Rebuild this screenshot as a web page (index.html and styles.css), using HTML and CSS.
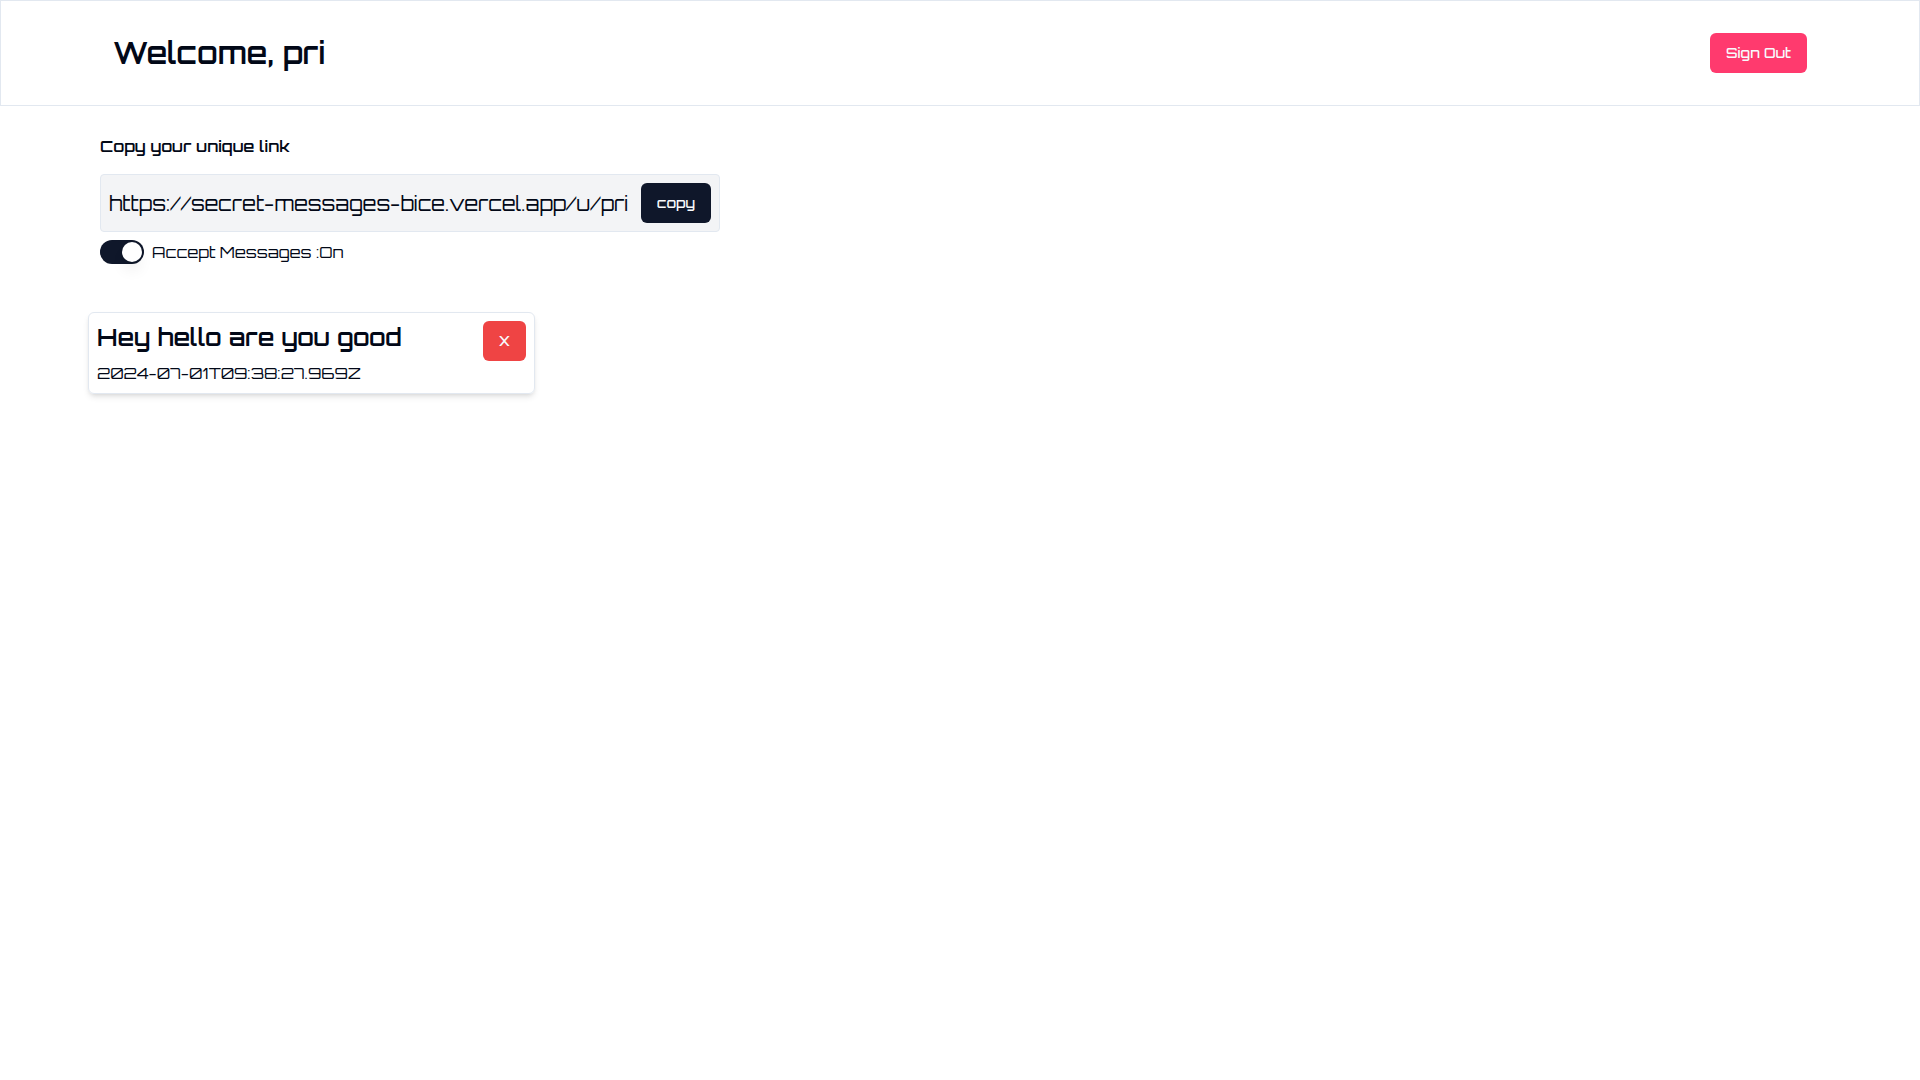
FILE: index.html
```
<!DOCTYPE html>
<html lang="en">
<head>
    <meta charset="UTF-8">
    <meta name="viewport" content="width=device-width, initial-scale=1.0">
    <link rel="stylesheet" href="styles.css">
    <title>Secret Messages</title>
</head>
<body>

    <header class="navbar">
        <h1 class="welcome">Welcome, pri</h1>
        <button type="button" class="btn btn-signout">Sign Out</button>
    </header>

    <main>
        <section class="settings">
            <label class="link-label" for="unique-link">Copy your unique link</label>
            <div class="link-box">
                <input type="text" id="unique-link" class="link-input" value="https://secret-messages-bice.vercel.app/u/pri" readonly>
                <button type="button" class="btn btn-copy">copy</button>
            </div>
            <div class="accept">
                <input type="checkbox" role="switch" id="accept-messages" class="switch" checked>
                <label for="accept-messages">Accept Messages :On</label>
            </div>
        </section>

        <section class="messages">
            <article class="card">
                <div class="card-text">
                    <h2 class="card-title">Hey hello are you good</h2>
                    <p class="card-date">2024-07-01T09:38:27.969Z</p>
                </div>
                <button type="button" class="btn btn-delete">X</button>
            </article>
        </section>
    </main>

</body>
</html>
```
FILE: styles.css
```
* {
    box-sizing: border-box;
}
body {
    margin: 0;
    font-family: Orbitron, Inter, sans-serif;
    font-size: 16px;
    line-height: 24px;
    background-color: #fff;
    color: #020817;
}
h1, h2, p {
    margin: 0;
}

.navbar {
    display: flex;
    align-items: center;
    justify-content: space-between;
    padding: 32px 112px;
    border: 1px solid #e2e8f0;
}
.welcome {
    font-size: 30px;
    line-height: 36px;
    font-weight: 600;
}

.btn {
    height: 40px;
    padding: 0 16px;
    border: 0;
    border-radius: 6px;
    font-family: inherit;
    font-size: 14px;
    line-height: 20px;
    font-weight: 500;
    color: #f8fafc;
    cursor: pointer;
}
.btn-signout {
    background-color: #ff3a6e;
}
.btn-copy {
    background-color: #0f172a;
}
.btn-delete {
    background-color: #ef4444;
}

.settings {
    display: flex;
    flex-direction: column;
    padding: 28px 100px 0;
}
.link-label {
    margin-bottom: 16px;
    font-weight: 600;
}
.link-box {
    display: flex;
    gap: 12px;
    max-width: 620px;
    padding: 8px;
    border: 1px solid #e2e8f0;
    border-radius: 4px;
    background-color: #f3f4f6;
}
.link-input {
    flex: 1;
    min-width: 0;
    padding: 0;
    border: 0;
    outline: 0;
    background: none;
    font-family: inherit;
    font-size: 20px;
    color: #020817;
}

.accept {
    display: flex;
    align-items: center;
    gap: 8px;
    margin-top: 8px;
}
.switch {
    appearance: none;
    display: flex;
    justify-content: flex-end;
    width: 44px;
    height: 24px;
    margin: 0;
    padding: 2px;
    border-radius: 12px;
    background-color: #0f172a;
    cursor: pointer;
}
.switch::before {
    content: "";
    width: 20px;
    height: 20px;
    border-radius: 50%;
    background-color: #fff;
    box-shadow: 0 10px 15px -3px rgba(0, 0, 0, 0.1), 0 4px 6px -4px rgba(0, 0, 0, 0.1);
}
.switch:not(:checked) {
    justify-content: flex-start;
    background-color: #e2e8f0;
}

.messages {
    padding: 48px 88px;
}
.card {
    display: flex;
    align-items: flex-start;
    justify-content: space-between;
    max-width: 447px;
    padding: 8px;
    border: 1px solid #e2e8f0;
    border-radius: 6px;
    box-shadow: 0 4px 6px -1px rgba(0, 0, 0, 0.1), 0 2px 4px -2px rgba(0, 0, 0, 0.1);
}
.card-title {
    font-size: 24px;
    line-height: 32px;
    font-weight: 600;
}
.card-date {
    margin-top: 8px;
}
```
